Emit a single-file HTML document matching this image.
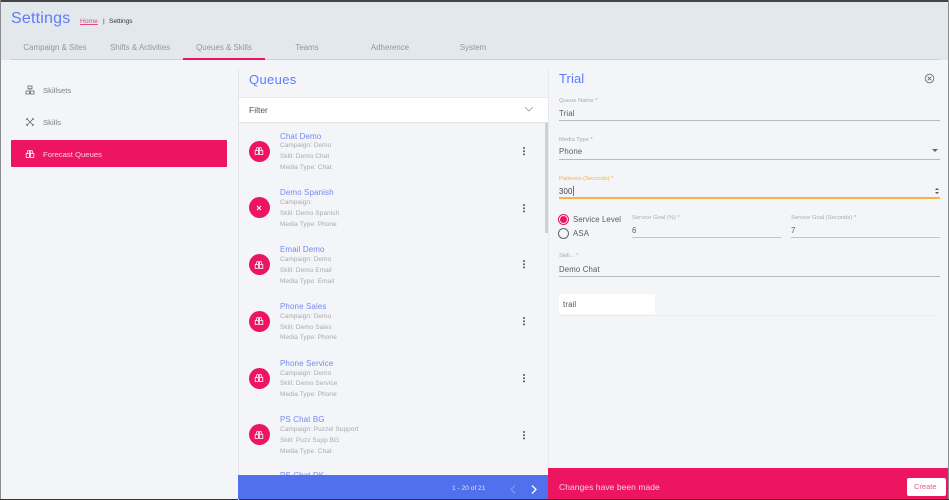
<!DOCTYPE html>
<html><head><meta charset="utf-8"><title>Settings</title>
<style>
html,body{margin:0;padding:0;width:949px;height:500px;overflow:hidden;background:#f3f5f9}
body{font-family:"Liberation Sans",sans-serif;position:relative}
div,span,a,svg{position:absolute;white-space:nowrap;display:block}
.tab{top:42px;font-size:7.900px;line-height:11px;color:#92979a;text-align:center;width:90px}
.t{left:280px;font-size:8px;line-height:11px;color:#7389f3;letter-spacing:.1px}
.d{left:280px;font-size:6.500px;line-height:10px;color:#a8aaae;letter-spacing:.05px}
.c{left:248.500px;width:21px;height:21px;border-radius:50%;background:#ee1560}
.k{left:523px;width:2px;height:2px;background:#555;border-radius:50%;box-shadow:0 3.200px 0 #555,0 6.400px 0 #555}
.lb{font-size:5.800px;line-height:8px;color:#a8aaae}
.v{font-size:7.800px;line-height:11px;color:#5c5c5c;letter-spacing:.15px}
.ln{height:1px;background:#b7b9bd}
.n{left:43px;font-size:7.700px;line-height:11px;color:#7c7f82}
</style></head><body>
<svg width="0" height="0" style="position:absolute"><defs>
<g id="bn" fill="none" stroke-width=".8"><path d="M2 4.300L3 1.500H4.400V4.300M5.600 4.300V1.500H7L8 4.300M1.200 4.500H4.400V8.500H1.200ZM5.600 4.500H8.800V8.500H5.600Z"/></g>
</defs></svg>

<div style="left:0;top:0;width:949px;height:60px;background:#e3e8ec"></div>
<div style="left:0;top:0;width:949px;height:1.500px;background:#444"></div>
<div style="left:0;top:0;width:1px;height:500px;background:#8a8c8e"></div>
<div style="left:948px;top:0;width:1px;height:500px;background:#8a8c8e"></div>
<div style="left:0;top:499px;width:949px;height:1px;background:#333"></div>

<div style="left:11px;top:9px;font-size:16px;line-height:20px;color:#5c7cfa;letter-spacing:.2px">Settings</div>
<a style="left:80px;top:17px;font-size:6.700px;line-height:9px;color:#e8447e;text-decoration:underline">Home</a>
<span style="left:103px;top:17px;font-size:6.500px;line-height:9px;color:#444">|</span>
<span style="left:109px;top:17px;font-size:6.500px;line-height:9px;color:#333">Settings</span>

<div class="tab" style="left:10px">Campaign &amp; Sites</div>
<div class="tab" style="left:95px">Shifts &amp; Activities</div>
<div class="tab" style="left:179px">Queues &amp; Skills</div>
<div class="tab" style="left:262px">Teams</div>
<div class="tab" style="left:345px">Adherence</div>
<div class="tab" style="left:428px">System</div>
<div style="left:11px;top:59px;width:929px;height:1px;background:#c9d0d3"></div>
<div style="left:183px;top:57.500px;width:82px;height:2px;background:#ee1560"></div>

<!-- left nav -->
<svg style="left:25px;top:85px" width="10" height="10" viewBox="0 0 10 10"><path d="M3 1H7V3.800H3ZM1 6H4.500V9H1ZM5.500 6H9V9H5.500ZM5 3.800V5" stroke="#666" stroke-width=".8" fill="none"/></svg>
<div class="n" style="top:85px">Skillsets</div>
<svg style="left:25px;top:117px" width="10" height="10" viewBox="0 0 10 10"><path d="M1.500 1.500L8.500 8.500M8.500 1.500L1.500 8.500M1 3L3 1M7 9L9 7M7 1L9 3M1 7L3 9" stroke="#666" stroke-width=".8" fill="none"/></svg>
<div class="n" style="top:117px">Skills</div>
<div style="left:11px;top:140px;width:216px;height:27px;background:#ee1560;border-radius:1px"></div>
<svg style="left:25px;top:149px" width="10" height="10" viewBox="0 0 10 10"><use href="#bn" stroke="#fff"/></svg>
<div class="n" style="top:149px;color:#fbd0df">Forecast Queues</div>

<!-- queues -->
<div style="left:238px;top:70px;width:1px;height:430px;background:#e2e4e7"></div>
<div style="left:249px;top:71px;font-size:13px;line-height:18px;color:#5c7cfa;letter-spacing:.35px">Queues</div>
<div style="left:239px;top:97px;width:309px;height:26px;background:#fff;border-top:1px solid #e8e9eb;border-bottom:1px solid #e0e2e4;box-sizing:border-box"></div>
<div style="left:249px;top:105px;font-size:8.500px;line-height:11px;color:#555">Filter</div>
<svg style="left:524px;top:106px" width="10" height="7" viewBox="0 0 10 7"><path d="M1 1L5 5L9 1" stroke="#999" stroke-width=".8" fill="none"/></svg>

<div class="t" style="top:131px">Chat Demo</div>
<div class="d" style="top:141px">Campaign: Demo</div>
<div class="d" style="top:152px">Skill: Demo Chat</div>
<div class="d" style="top:163px">Media Type: Chat</div>
<div class="c" style="top:141px"></div>
<svg style="left:254px;top:146px" width="10" height="10" viewBox="0 0 10 10"><use href="#bn" stroke="#fff"/></svg>
<div class="k" style="top:147px"></div>

<div class="t" style="top:187px">Demo Spanish</div>
<div class="d" style="top:198px">Campaign:</div>
<div class="d" style="top:209px">Skill: Demo Spanish</div>
<div class="d" style="top:220px">Media Type: Phone</div>
<div class="c" style="top:197px"></div>
<svg style="left:254px;top:203px" width="10" height="10" viewBox="0 0 10 10"><path d="M3 3L7 7M7 3L3 7" stroke="#fff" fill="none"/></svg>
<div class="k" style="top:204px"></div>

<div class="t" style="top:244px">Email Demo</div>
<div class="d" style="top:255px">Campaign: Demo</div>
<div class="d" style="top:266px">Skill: Demo Email</div>
<div class="d" style="top:277px">Media Type: Email</div>
<div class="c" style="top:254px"></div>
<svg style="left:254px;top:260px" width="10" height="10" viewBox="0 0 10 10"><use href="#bn" stroke="#fff"/></svg>
<div class="k" style="top:260px"></div>

<div class="t" style="top:301px">Phone Sales</div>
<div class="d" style="top:312px">Campaign: Demo</div>
<div class="d" style="top:323px">Skill: Demo Sales</div>
<div class="d" style="top:333px">Media Type: Phone</div>
<div class="c" style="top:311px"></div>
<svg style="left:254px;top:316px" width="10" height="10" viewBox="0 0 10 10"><use href="#bn" stroke="#fff"/></svg>
<div class="k" style="top:317px"></div>

<div class="t" style="top:358px">Phone Service</div>
<div class="d" style="top:369px">Campaign: Demo</div>
<div class="d" style="top:379px">Skill: Demo Service</div>
<div class="d" style="top:390px">Media Type: Phone</div>
<div class="c" style="top:368px"></div>
<svg style="left:254px;top:373px" width="10" height="10" viewBox="0 0 10 10"><use href="#bn" stroke="#fff"/></svg>
<div class="k" style="top:374px"></div>

<div class="t" style="top:414px">PS Chat BG</div>
<div class="d" style="top:425px">Campaign: Puzzel Support</div>
<div class="d" style="top:436px">Skill: Puzz Supp BG</div>
<div class="d" style="top:447px">Media Type: Chat</div>
<div class="c" style="top:424px"></div>
<svg style="left:254px;top:430px" width="10" height="10" viewBox="0 0 10 10"><use href="#bn" stroke="#fff"/></svg>
<div class="k" style="top:431px"></div>

<div class="t" style="top:470px">PS Chat DK</div>

<div style="left:545px;top:123px;width:3px;height:110px;background:#cfd0d2"></div>
<div style="left:548px;top:70px;width:1px;height:398px;background:#e6e8eb"></div>

<div style="left:238px;top:475px;width:310px;height:24px;background:#5170ee"></div>
<div style="left:452px;top:484px;font-size:6.500px;line-height:10px;color:#dfe5fd;letter-spacing:.05px">1 - 20 of 21</div>
<svg style="left:509px;top:484px" width="8" height="11" viewBox="0 0 8 11"><path d="M6 1.500L2 5.500L6 9.500" stroke="#7b92f0" stroke-width="1.300" fill="none"/></svg>
<svg style="left:530px;top:484px" width="8" height="11" viewBox="0 0 8 11"><path d="M2 1.500L6 5.500L2 9.500" stroke="#fff" stroke-width="1.300" fill="none"/></svg>

<!-- form -->
<div style="left:559px;top:70px;font-size:13px;line-height:18px;color:#5c7cfa;letter-spacing:.1px">Trial</div>
<svg style="left:924px;top:73px" width="11" height="11" viewBox="0 0 11 11"><circle cx="5.500" cy="5.500" r="4.300" stroke="#666" stroke-width=".8" fill="none"/><path d="M3.700 3.700L7.300 7.300M7.300 3.700L3.700 7.300" stroke="#666" stroke-width=".8" fill="none"/></svg>

<div class="lb" style="left:559px;top:96.500px">Queue Name *</div>
<div class="v" style="left:559px;top:108px">Trial</div>
<div class="ln" style="left:559px;top:120px;width:381px"></div>

<div class="lb" style="left:559px;top:135.500px">Media Type *</div>
<div class="v" style="left:559px;top:146px">Phone</div>
<div class="ln" style="left:559px;top:159px;width:381px"></div>
<div style="left:932px;top:149px;width:0;height:0;border-left:3px solid transparent;border-right:3px solid transparent;border-top:3px solid #666"></div>

<div class="lb" style="left:559px;top:174.500px;color:#f5b04a">Patience (Seconds) *</div>
<div class="v" style="left:559px;top:186px;color:#444">300</div>
<div style="left:572.500px;top:186px;width:1px;height:10px;background:#777"></div>
<div style="left:559px;top:197px;width:381px;height:1.500px;background:#f9b343"></div>
<div style="left:935px;top:188px;width:0;height:0;border-left:2px solid transparent;border-right:2px solid transparent;border-bottom:2.500px solid #555"></div>
<div style="left:935px;top:191.500px;width:0;height:0;border-left:2px solid transparent;border-right:2px solid transparent;border-top:2.500px solid #555"></div>

<div style="left:558px;top:214px;width:9px;height:9px;border:1.200px solid #ee1560;border-radius:50%"></div>
<div style="left:560.100px;top:216.100px;width:7px;height:7px;background:#ee1560;border-radius:50%"></div>
<div class="v" style="left:573px;top:214px;font-size:7.800px;letter-spacing:.1px">Service Level</div>
<div style="left:558px;top:227.500px;width:9px;height:9px;border:1.200px solid #666;border-radius:50%"></div>
<div class="v" style="left:573px;top:228px">ASA</div>

<div class="lb" style="left:632px;top:214px">Service Goal (%) *</div>
<div class="v" style="left:632px;top:225px">6</div>
<div class="ln" style="left:632px;top:237px;width:149px;background:#c2c4c8"></div>
<div class="lb" style="left:791px;top:214px">Service Goal (Seconds) *</div>
<div class="v" style="left:791px;top:225px">7</div>
<div class="ln" style="left:791px;top:237px;width:149px;background:#c2c4c8"></div>

<div class="lb" style="left:559px;top:252px">Skill... *</div>
<div class="v" style="left:559px;top:264px">Demo Chat</div>
<div class="ln" style="left:559px;top:276px;width:381px"></div>

<div style="left:559px;top:294px;width:96px;height:20px;background:#fff"></div>
<div class="v" style="left:563px;top:299px;color:#555">trail</div>
<div style="left:559px;top:315px;width:381px;height:1px;background:#eceef1"></div>

<div style="left:548px;top:468px;width:400px;height:31px;background:#ee1560"></div>
<div style="left:559px;top:482px;font-size:8.500px;line-height:11px;color:#fbd0df;letter-spacing:.05px">Changes have been made</div>
<div style="left:906.500px;top:478px;width:39.500px;height:18px;background:#fff;border-radius:2px"></div>
<div style="left:914px;top:482px;font-size:7.500px;line-height:10px;color:#ee5a8c">Create</div>
</body></html>
